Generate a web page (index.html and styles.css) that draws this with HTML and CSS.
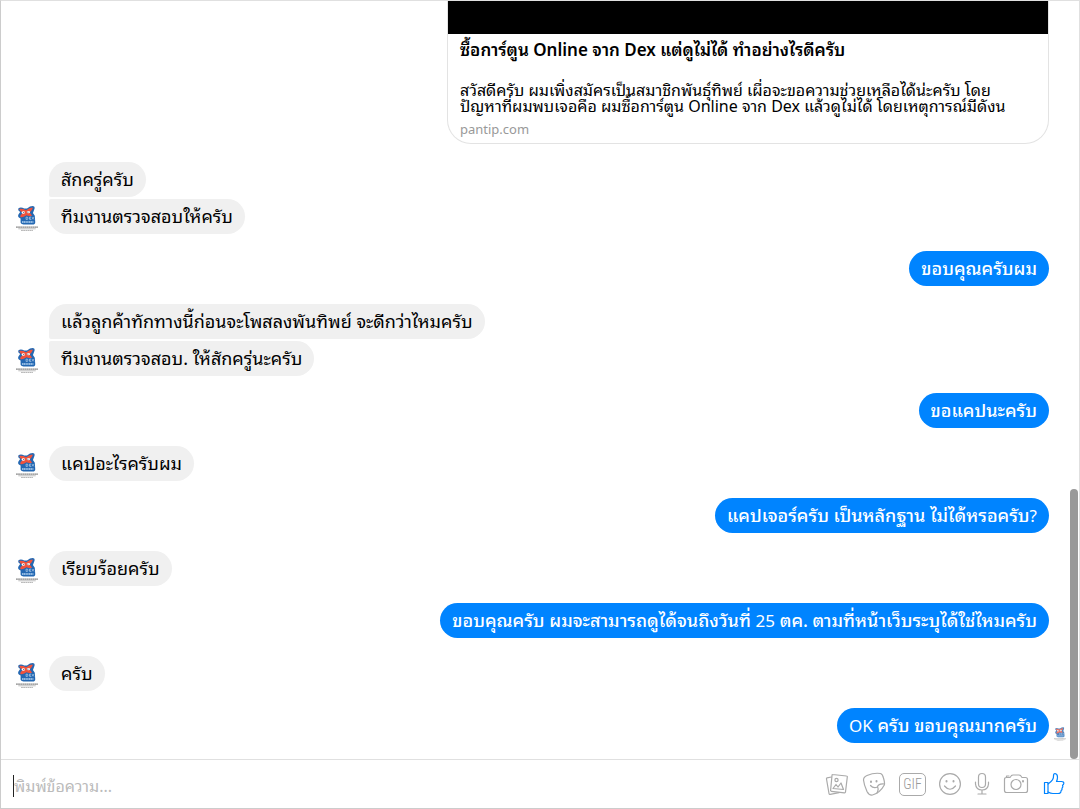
FILE: index.html
```html
<!DOCTYPE html>
<html lang="th">
<head>
    <meta charset="UTF-8">
    <meta name="viewport" content="width=device-width, initial-scale=1.0">
    <title>Messenger</title>
    <link rel="stylesheet" href="styles.css">
</head>
<body>
    <!-- page logo, reused by every avatar -->
    <svg class="defs" aria-hidden="true">
        <symbol id="logo" viewBox="0 0 24 28">
            <path d="M2.500 3 Q5 1 9 3 L12 3 Q16 0 19 .5 Q21 1 20 4 L18.500 8 L20.500 11 L21 18 Q21 20.500 18 20.500 L8 20.500 Q4.500 20 5 17 L5 14 Q1.500 13 2.500 10 L4.500 7 Q1.500 5 2.500 3 Z" fill="#2468b2"/>
            <path d="M3.500 3.500 Q7 3 11 5 Q15 2 18 2 Q19 3 15 7.500 L17.500 11 Q14 12 11.500 10.500 Q7 13.500 5 12.500 Q3.500 11 7.500 8 Q4 6 3.500 3.500 Z" fill="#f0533c"/>
            <ellipse cx="8" cy="7.500" rx="1.800" ry="1.300" fill="#fff"/>
            <ellipse cx="13.500" cy="7" rx="1.800" ry="1.300" fill="#fff"/>
            <circle cx="8.500" cy="7.500" r=".6" fill="#234"/>
            <circle cx="13" cy="7" r=".6" fill="#234"/>
            <path d="M11 12.500 V15 H12.500 Q13.500 13.500 12.500 12.500 Z M16.500 12.500 H14.800 V15 H16.500 M14.800 13.700 H16 M17.500 12.500 L19.500 15 M19.500 12.500 L17.500 15" fill="none" stroke="#c3daf0" stroke-width=".7"/>
            <path d="M6.500 17.800 H19" stroke="#b5d4f2" stroke-width="1.600" stroke-dasharray="1.500 .4"/>
            <path d="M0 23.500 H24" stroke="#888" stroke-width="1.400" stroke-dasharray="2 .3"/>
            <path d="M2.500 25.200 H21.500" stroke="#c4c4c4" stroke-width="1.200"/>
            <path d="M5.500 27 H18.500" stroke="#aaa" stroke-width="1" stroke-dasharray="2 .4"/>
        </symbol>
    </svg>

    <div class="window">
        <main class="chat">
            <a class="linkCard" href="#">
                <span class="preview"></span>
                <span class="cardText">
                    <strong>ซื้อการ์ตูน Online จาก Dex แต่ดูไม่ได้ ทำอย่างไรดีครับ</strong>
                    <span class="description">สวัสดีครับ ผมเพิ่งสมัครเป็นสมาชิกพันธุ์ทิพย์ เผื่อจะขอความช่วยเหลือได้น่ะครับ โดย<br>ปัญหาที่ผมพบเจอคือ ผมซื้อการ์ตูน Online จาก Dex แล้วดูไม่ได้ โดยเหตุการณ์มีดังน</span>
                    <span class="site">pantip.com</span>
                </span>
            </a>

            <div class="group received">
                <svg class="avatar"><use href="#logo"/></svg>
                <div class="bubbles">
                    <p class="bubble">สักครู่ครับ</p>
                    <p class="bubble">ทีมงานตรวจสอบให้ครับ</p>
                </div>
            </div>
            <div class="group sent">
                <p class="bubble">ขอบคุณครับผม</p>
            </div>
            <div class="group received">
                <svg class="avatar"><use href="#logo"/></svg>
                <div class="bubbles">
                    <p class="bubble">แล้วลูกค้าทักทางนี้ก่อนจะโพสลงพันทิพย์ จะดีกว่าไหมครับ</p>
                    <p class="bubble">ทีมงานตรวจสอบ. ให้สักครู่นะครับ</p>
                </div>
            </div>
            <div class="group sent">
                <p class="bubble">ขอแคปนะครับ</p>
            </div>
            <div class="group received">
                <svg class="avatar"><use href="#logo"/></svg>
                <div class="bubbles">
                    <p class="bubble">แคปอะไรครับผม</p>
                </div>
            </div>
            <div class="group sent">
                <p class="bubble">แคปเจอร์ครับ เป็นหลักฐาน ไม่ได้หรอครับ<span class="latin">?</span></p>
            </div>
            <div class="group received">
                <svg class="avatar"><use href="#logo"/></svg>
                <div class="bubbles">
                    <p class="bubble">เรียบร้อยครับ</p>
                </div>
            </div>
            <div class="group sent">
                <p class="bubble">ขอบคุณครับ ผมจะสามารถดูได้จนถึงวันที่ <span class="latin">25</span> ตค. ตามที่หน้าเว็บระบุได้ใช่ไหมครับ</p>
            </div>
            <div class="group received">
                <svg class="avatar"><use href="#logo"/></svg>
                <div class="bubbles">
                    <p class="bubble">ครับ</p>
                </div>
            </div>
            <div class="group sent last">
                <p class="bubble"><span class="latin">OK</span> ครับ ขอบคุณมากครับ</p>
                <svg class="seen"><use href="#logo"/></svg>
            </div>
            <div class="scrollThumb"></div>
        </main>

        <form class="composer">
            <input type="text" class="message" aria-label="พิมพ์ข้อความ" placeholder="พิมพ์ข้อความ...">
            <div class="tools">
                <button type="button" aria-label="Photos">
                    <svg width="24" height="24" viewBox="0 0 24 24">
                        <path d="M7.500 2.500 L21.500 4 Q22.500 4 22.300 5 L20.500 20 Q20.400 21 19.400 20.900 L6.500 19.300 Q5.500 19.200 5.600 18.200 L7 3.500 Q7 2.400 7.500 2.500 Z"/>
                        <path d="M6.500 5 L2 5.800 Q1.300 6 1.500 7 L4 21.500 Q4.200 22.600 5.200 22.400 L14 20.700"/>
                        <circle cx="11.500" cy="8" r="1.600"/>
                        <path d="M8 16.500 L11 12.500 L13 15 L16 11 L18.500 17.500 Z"/>
                    </svg>
                </button>
                <button type="button" aria-label="Stickers">
                    <svg width="24" height="24" viewBox="0 0 24 24">
                        <path d="M5 3.500 Q12 .5 18.500 1.500 Q20.500 2 21.500 6 Q23 11 22.300 13 Q18 21 10.500 23 Q7 23.500 5 19.500 Q2 13 1.500 8 Q1.500 5 5 3.500 Z"/>
                        <path d="M22.300 12 Q16 11.500 15.500 15 Q17 17 15 21"/>
                        <path d="M15.500 15 Q11.500 17 8.500 13.500"/>
                        <path class="eyes" d="M9 9.500 V10 M14.500 9 V9.500"/>
                    </svg>
                </button>
                <button type="button" class="gif" aria-label="GIF">GIF</button>
                <button type="button" aria-label="Emoji">
                    <svg width="22" height="24" viewBox="1 0 22 24">
                        <circle cx="12" cy="12" r="10.400"/>
                        <path d="M6.500 14 Q12 20.500 17.500 14"/>
                        <path class="eyes" d="M8.500 9 V9.500 M15.500 9 V9.500"/>
                    </svg>
                </button>
                <button type="button" aria-label="Voice">
                    <svg width="16" height="24" viewBox="0 0 16 24">
                        <rect x="4.500" y="1.500" width="7" height="14" rx="3.500"/>
                        <path d="M1.500 10 V12 Q2 18 8 18 Q14 18 14.500 12 V10 M8 18 V22 M4 22 H12"/>
                    </svg>
                </button>
                <button type="button" aria-label="Camera">
                    <svg width="26" height="24" viewBox="0 0 26 24">
                        <path d="M3.500 5.500 H7 L8.500 3.500 Q9 3 10 3 H16 Q17 3 17.500 3.500 L19 5.500 H22.500 Q24.500 5.500 24.500 7.500 V18.500 Q24.500 20.500 22.500 20.500 H3.500 Q1.500 20.500 1.500 18.500 V7.500 Q1.500 5.500 3.500 5.500 Z M3.500 5.500 V4 H6"/>
                        <circle cx="13" cy="12.500" r="5"/>
                        <path class="eyes" d="M20 9 V9.500"/>
                    </svg>
                </button>
                <button type="button" class="like" aria-label="Like">
                    <svg width="24" height="24" viewBox="0 0 24 24">
                        <path d="M2.500 10.500 H6 V21.500 H2.500 Z"/>
                        <path d="M6 12 Q12 8 11.500 4 Q11.500 1.500 13 1.500 Q15.500 2 15.500 5 Q15.500 7.500 14.500 9.500 H19.500 Q22 9.500 21.800 11.500 Q21.700 13 20.500 13.200 Q21.500 15 20 16.200 Q20.500 18 19 18.700 Q19.200 21.500 16 21.500 H11 Q8.500 21.500 6 20"/>
                    </svg>
                </button>
            </div>
        </form>
    </div>
</body>
</html>
```
FILE: styles.css
```css
* {
    box-sizing: border-box;
}

body {
    margin: 0;
    background-color: #fff;
    color: #000;
    font-family: "Noto Sans", "Leelawadee UI", "Noto Sans Thai Looped", "Noto Looped Thai", "Loma", "Waree", "Noto Sans Thai", sans-serif;
    font-size: 18px;
}

.defs {
    display: none;
}

.window {
    display: flex;
    flex-direction: column;
    min-height: 100vh;
    border: 1px solid #e0e0e0;
    border-left-color: #ccc;
    border-bottom-color: #ccc;
}

.chat {
    position: relative;
    flex: 1;
    display: flex;
    flex-direction: column;
    padding: 0 30px 16px 15px;
}

.linkCard {
    align-self: flex-end;
    width: 602px;
    max-width: 100%;
    margin-bottom: 18px;
    border: 1px solid #e3e3e3;
    border-top: 0;
    border-radius: 0 0 24px 24px;
    color: #000;
    text-decoration: none;
}

.preview {
    display: block;
    height: 33px;
    background-color: #000;
}

.cardText {
    display: flex;
    flex-direction: column;
    height: 109px;
    padding: 6px 12px 4px;
    font-size: 16px;
    white-space: nowrap;
}

.cardText strong {
    height: 44px;
    font-size: 17px;
    font-weight: 600;
    line-height: 20px;
}

.description {
    height: 39px;
    line-height: 16px;
}

.site {
    color: #999;
    font-size: 13px;
    line-height: 20px;
}

.group {
    display: flex;
    align-items: flex-end;
}

.received {
    gap: 11px;
    margin-bottom: 17px;
}

.sent {
    justify-content: flex-end;
    margin-bottom: 18px;
}

.last {
    position: relative;
    margin-bottom: 0;
}

.avatar {
    width: 22px;
    height: 27px;
    margin-bottom: 2px;
    flex: none;
}

.seen {
    position: absolute;
    right: -18px;
    bottom: 2px;
    width: 14px;
    height: 14px;
    opacity: .8;
}

.bubbles {
    display: flex;
    flex-direction: column;
    align-items: flex-start;
    gap: 2px;
}

.bubble {
    height: 35px;
    margin: 0;
    padding: 0 12px;
    border-radius: 18px;
    line-height: 35px;
    white-space: nowrap;
}

.received .bubble {
    background-color: #f0f0f0;
}

.received .bubble:not(:last-child) {
    border-bottom-left-radius: 2px;
}

.received .bubble:not(:first-child) {
    border-top-left-radius: 2px;
}

.sent .bubble {
    background-color: #0084ff;
    color: #fff;
    font-weight: 500;
}

.sent .latin {
    font-size: 17px;
    font-weight: 400;
}

.scrollThumb {
    position: absolute;
    right: 1px;
    bottom: 0;
    width: 8px;
    height: 270px;
    border-radius: 4px;
    background-color: #999;
}

.composer {
    display: flex;
    align-items: center;
    height: 49px;
    padding: 0 13px 0 12px;
    border-top: 1px solid #e0e0e0;
}

.message {
    flex: 1;
    min-width: 0;
    height: 22px;
    margin-top: 4px;
    padding: 0;
    border: 0;
    border-left: 1px solid #222;
    outline: 0;
    font-family: inherit;
    font-size: 16px;
}

.message::placeholder {
    color: #bbb;
    opacity: 1;
}

.tools {
    display: flex;
    align-items: center;
    gap: 13px;
}

.tools button {
    display: flex;
    padding: 0;
    border: 0;
    background: none;
    cursor: pointer;
}

.tools svg {
    fill: none;
    stroke: #aaa;
    stroke-width: 1.2;
    stroke-linecap: round;
    stroke-linejoin: round;
}

.tools .eyes {
    stroke-width: 2;
}

.tools .gif {
    width: 27px;
    height: 23px;
    align-items: center;
    justify-content: center;
    border: 1px solid #aaa;
    border-radius: 5px;
    color: #999;
    font-family: "Roboto Condensed", "Open Sans Condensed", Roboto, sans-serif;
    font-size: 14px;
    font-weight: 300;
}

.tools .like svg {
    stroke: #0084ff;
}
```
